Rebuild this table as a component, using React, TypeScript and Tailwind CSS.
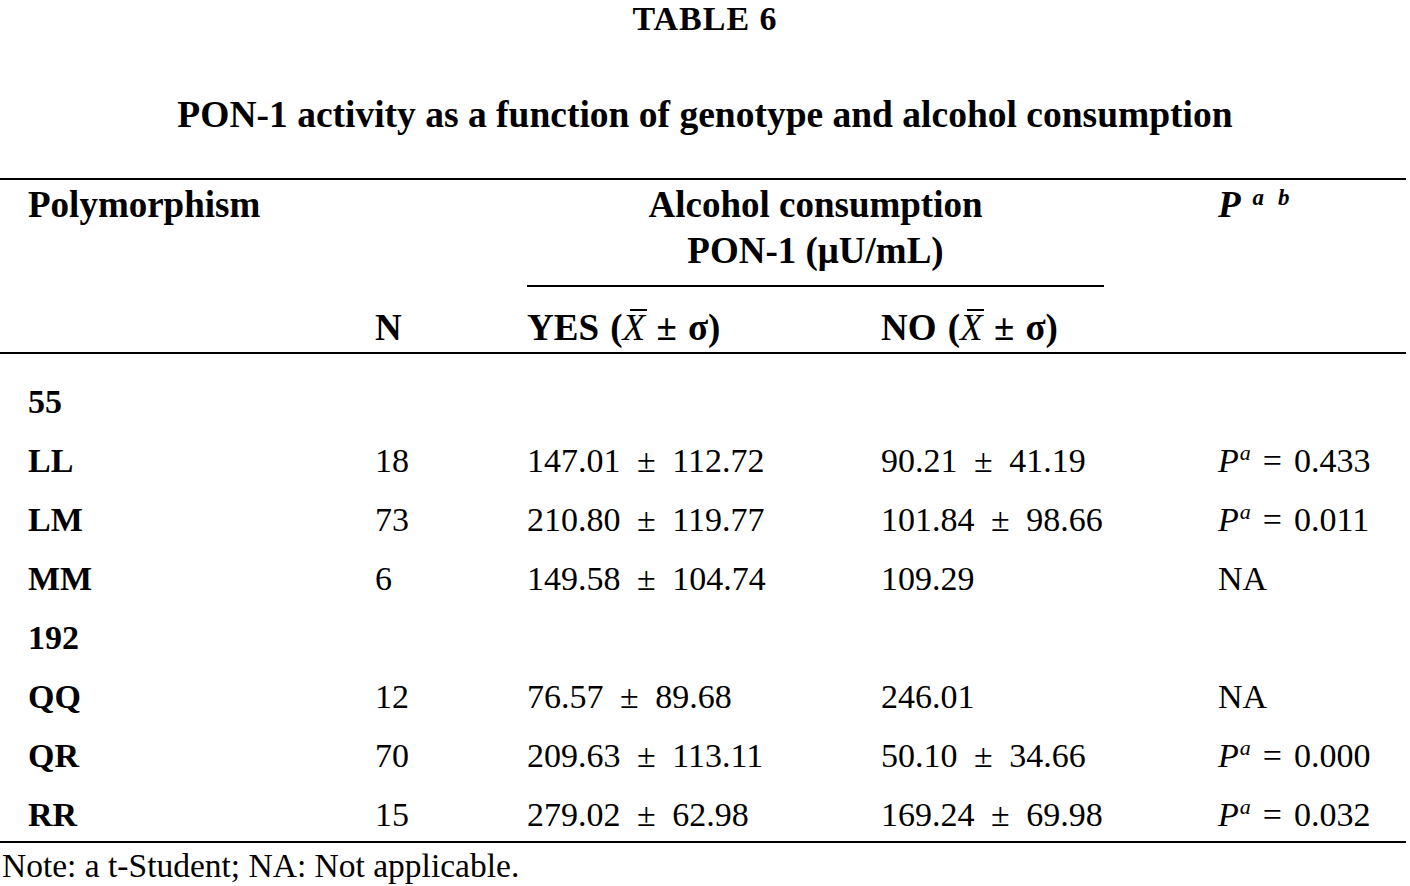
import React from "react";

const serif = { fontFamily: '"Liberation Serif", "Times New Roman", serif' };

function Xbar() {
  return (
    <span className="relative inline-block italic font-normal">
      X
      <span className="absolute left-[7px] top-[3px] w-[17px] h-[2px] bg-black" />
    </span>
  );
}

function PVal({ v }: { v: string }) {
  return (
    <span>
      <span className="italic">P</span>
      <span className="italic text-[22px] relative top-[-12px] ml-[1px]">a</span>
      <span className="ml-[12px]">=</span>
      <span className="ml-[12px]">{v}</span>
    </span>
  );
}

type Row = { label: string; n?: string; yes?: string; no?: string; p?: string };

const rows: Row[] = [
  { label: "55" },
  { label: "LL", n: "18", yes: "147.01 ± 112.72", no: "90.21 ± 41.19", p: "0.433" },
  { label: "LM", n: "73", yes: "210.80 ± 119.77", no: "101.84 ± 98.66", p: "0.011" },
  { label: "MM", n: "6", yes: "149.58 ± 104.74", no: "109.29", p: "NA" },
  { label: "192" },
  { label: "QQ", n: "12", yes: "76.57 ± 89.68", no: "246.01", p: "NA" },
  { label: "QR", n: "70", yes: "209.63 ± 113.11", no: "50.10 ± 34.66", p: "0.000" },
  { label: "RR", n: "15", yes: "279.02 ± 62.98", no: "169.24 ± 69.98", p: "0.032" },
];

export default function App() {
  return (
    <div className="w-[1410px] h-[886px] bg-white text-black overflow-hidden" style={serif}>
      <div className="text-center font-bold text-[34px] leading-[38px] tracking-[1px]">TABLE 6</div>
      <div className="mt-[55px] text-center font-bold text-[37.5px] leading-[44px]">
        PON-1 activity as a function of genotype and alcohol consumption
      </div>
      <div className="mt-[41px] w-[1406px] border-t-[2px] border-black" />
      {/* header */}
      <div className="flex font-bold text-[37px] leading-[44px]">
        <div className="w-[527px] pt-[2.5px]">
          <div className="pl-[28px]">Polymorphism</div>
          <div className="pl-[375px] mt-[79px]">N</div>
        </div>
        <div className="w-[577px] pt-[2.5px]">
          <div className="text-center">Alcohol consumption</div>
          <div className="text-center mt-[2px]">PON-1 (μU/mL)</div>
          <div className="mt-[12.5px] border-t-[2px] border-black" />
          <div className="flex mt-[18.5px] [word-spacing:2px]">
            <div className="w-[354px]">
              YES (<Xbar /> ± σ)
            </div>
            <div>
              NO (<Xbar /> ± σ)
            </div>
          </div>
        </div>
        <div className="pl-[114px] pt-[2.5px] italic">
          <span>P</span>
          <span className="text-[23px] relative top-[-12px] ml-[12px]">a</span>
          <span className="text-[23px] relative top-[-12px] ml-[14px]">b</span>
        </div>
      </div>
      <div className="mt-[2.5px] w-[1406px] border-t-[2px] border-black" />
      <div className="pt-[18px] text-[34px] leading-[59px]">
        {rows.map((r) => (
          <div key={r.label} className="flex h-[59px]">
            <div className="w-[375px] pl-[28px] font-bold">{r.label}</div>
            <div className="w-[152px]">{r.n}</div>
            <div className="w-[354px] [word-spacing:8px] whitespace-nowrap">{r.yes}</div>
            <div className="w-[337px] [word-spacing:8px] whitespace-nowrap">{r.no}</div>
            <div className="whitespace-nowrap">{r.p ? (r.p === "NA" ? "NA" : <PVal v={r.p} />) : null}</div>
          </div>
        ))}
      </div>
      <div className="mt-[-3px] w-[1406px] border-t-[2px] border-black" />
      <div className="mt-[3px] pl-[2px] text-[33.5px] leading-[40px]">Note: a t-Student; NA: Not applicable.</div>
    </div>
  );
}
